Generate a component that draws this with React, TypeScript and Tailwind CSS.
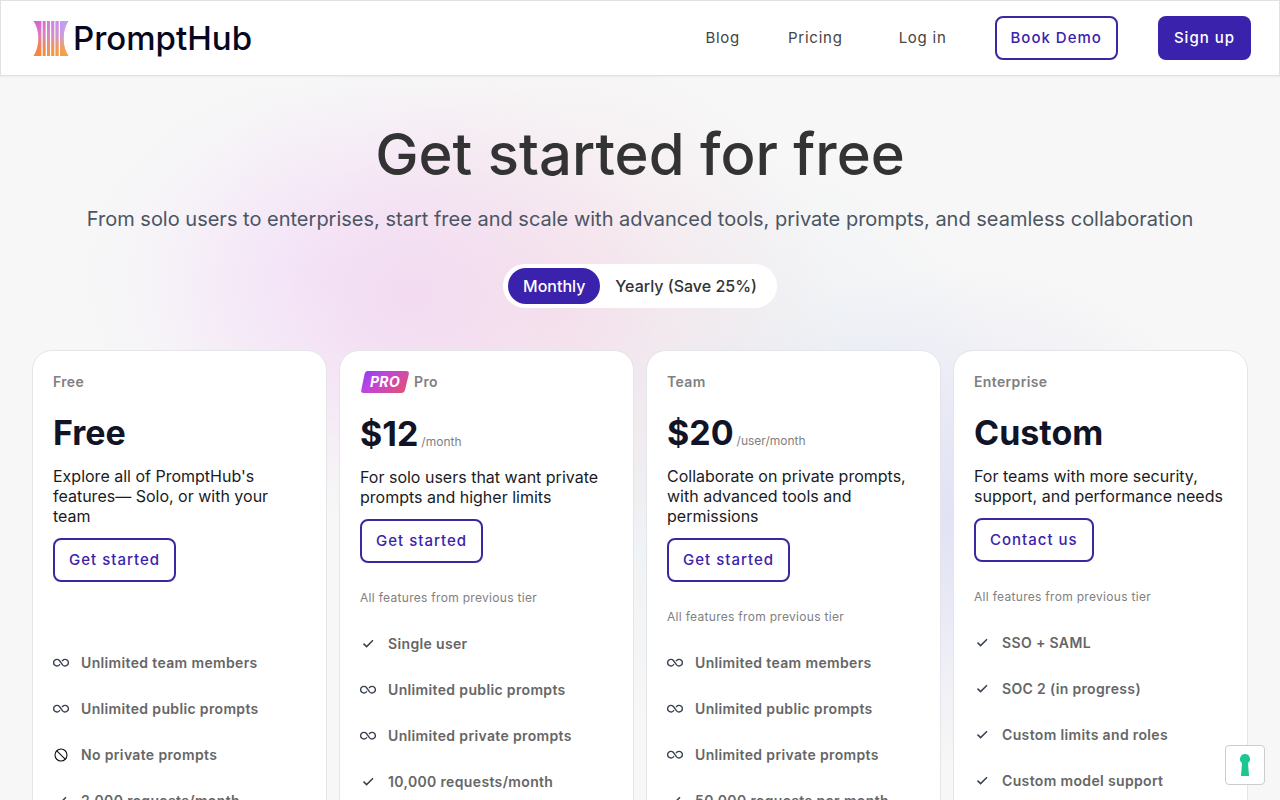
import { useState } from "react";

type Icon = "check" | "infinity" | "ban";
type Plan = {
  name: string;
  price: string;
  unit?: string;
  description: string;
  cta: string;
  note?: string;
  pro?: boolean;
  features: [Icon, string][];
};

const plans: Plan[] = [
  {
    name: "Free",
    price: "Free",
    description: "Explore all of PromptHub's features— Solo, or with your team",
    cta: "Get started",
    features: [
      ["infinity", "Unlimited team members"],
      ["infinity", "Unlimited public prompts"],
      ["ban", "No private prompts"],
      ["check", "2,000 requests/month"],
    ],
  },
  {
    name: "Pro",
    pro: true,
    price: "$12",
    unit: "/month",
    description: "For solo users that want private prompts and higher limits",
    cta: "Get started",
    note: "All features from previous tier",
    features: [
      ["check", "Single user"],
      ["infinity", "Unlimited public prompts"],
      ["infinity", "Unlimited private prompts"],
      ["check", "10,000 requests/month"],
    ],
  },
  {
    name: "Team",
    price: "$20",
    unit: "/user/month",
    description: "Collaborate on private prompts, with advanced tools and permissions",
    cta: "Get started",
    note: "All features from previous tier",
    features: [
      ["infinity", "Unlimited team members"],
      ["infinity", "Unlimited public prompts"],
      ["infinity", "Unlimited private prompts"],
      ["check", "50,000 requests per month"],
    ],
  },
  {
    name: "Enterprise",
    price: "Custom",
    description: "For teams with more security, support, and performance needs",
    cta: "Contact us",
    note: "All features from previous tier",
    features: [
      ["check", "SSO + SAML"],
      ["check", "SOC 2 (in progress)"],
      ["check", "Custom limits and roles"],
      ["check", "Custom model support"],
    ],
  },
];

function FeatureIcon({ icon }: { icon: Icon }) {
  return (
    <svg viewBox="0 0 16 16" className="size-4 shrink-0" fill="none" stroke="#374151" aria-hidden="true">
      {icon === "check" && <path d="M3.5 7.6 6.6 10.6 13 4.3" strokeWidth="1.5" />}
      {icon === "infinity" && (
        <path
          d="M6.8 9.2 6.4 9.9A3.3 3.3 0 1 1 6.4 5.5L9.6 9.9A3.3 3.3 0 1 0 9.6 5.5L9.1 6.2"
          strokeWidth="1.4"
        />
      )}
      {icon === "ban" && (
        <g stroke="#111" strokeWidth="1.1">
          <circle cx="8" cy="8" r="6" />
          <path d="M3.8 3.8 12.2 12.2" />
        </g>
      )}
    </svg>
  );
}

function Logo() {
  return (
    <svg viewBox="0 0 36 36" className="size-9" aria-hidden="true">
      <defs>
        <linearGradient id="logo-fill" x1="0" y1="0" x2="0" y2="1">
          <stop offset="0" stopColor="#d95fd8" />
          <stop offset="0.4" stopColor="#e07bb4" />
          <stop offset="0.75" stopColor="#f28350" />
          <stop offset="1" stopColor="#f5883f" />
        </linearGradient>
        <linearGradient id="logo-side" x1="0" y1="0" x2="0" y2="1">
          <stop offset="0" stopColor="#b9a6fa" />
          <stop offset="0.45" stopColor="#c9a0dc" />
          <stop offset="0.8" stopColor="#f2a35c" />
          <stop offset="1" stopColor="#f7a23d" />
        </linearGradient>
        <linearGradient id="logo-fade" x1="0" y1="0" x2="1" y2="0">
          <stop offset="0.15" stopColor="#fff" stopOpacity="0" />
          <stop offset="0.9" stopColor="#fff" />
        </linearGradient>
        <mask id="logo-mask">
          <rect width="36" height="36" fill="url(#logo-fade)" />
        </mask>
        <clipPath id="logo-shape">
          <path d="M.5 1H8.4V36H.5C3.6 31.3 5.3 25.5 5.3 18.5S3.6 5.7.5 1ZM9.7 1H12.6V36H9.7ZM14 1H16.9V36H14ZM18.3 1H21.2V36H18.3ZM22.6 1H25.5V36H22.6ZM27 1H35.3C32.2 5.7 30.5 11.5 30.5 18.5S32.2 31.3 35.3 36H27Z" />
        </clipPath>
      </defs>
      <g clipPath="url(#logo-shape)">
        <rect width="36" height="36" fill="url(#logo-fill)" />
        <rect width="36" height="36" fill="url(#logo-side)" mask="url(#logo-mask)" />
      </g>
    </svg>
  );
}

function ProBadge() {
  return (
    <span className="relative mr-1 inline-flex h-[22px] w-[50px] items-center justify-center">
      <svg viewBox="0 0 50 22" className="absolute inset-0 size-full" aria-hidden="true">
        <defs>
          <linearGradient id="pro-fill" x1="0" y1="0" x2="1" y2="0.5">
            <stop offset="0" stopColor="#8b3df0" />
            <stop offset="0.4" stopColor="#bb45e2" />
            <stop offset="1" stopColor="#dc4f83" />
          </linearGradient>
        </defs>
        <path d="M7.4 0H46Q49.5 0 48.8 3.2L45 19Q44.2 22 41.2 22H3.6Q.6 22 1.3 19L4.7 2.6Q5.3 0 7.4 0Z" fill="url(#pro-fill)" />
      </svg>
      <span className="relative text-sm leading-5 font-bold text-white italic">PRO</span>
    </span>
  );
}

const outlineButton =
  "inline-flex h-11 items-center rounded-lg border-2 border-[#3b28a0] bg-white px-3.5 text-[15px] font-medium tracking-[1px] text-[#3b22ac]";

function PlanCard({ plan }: { plan: Plan }) {
  return (
    <article className="rounded-[20px] border border-[#e3e5e8] bg-white p-5">
      <h2 className="flex min-h-[21px] items-center text-sm leading-5 font-semibold tracking-wide text-[#808080]">
        {plan.pro && <ProBadge />}
        {plan.name}
      </h2>
      <p className="mt-5 flex items-baseline leading-[42px]">
        <span className="text-[34px] leading-[42px] font-bold text-[#101426]">{plan.price}</span>
        {plan.unit && <span className="ml-[3px] text-xs text-[#808080]">{plan.unit}</span>}
      </p>
      <p className="mt-3 leading-5 text-[#1a1b25]">{plan.description}</p>
      <a href="#" className={`mt-3 ${outlineButton}`}>
        {plan.cta}
      </a>
      <p className="mt-[27px] min-h-4 text-xs leading-4 tracking-wide text-[#808080]">{plan.note}</p>
      <ul className="mt-[27px] space-y-6">
        {plan.features.map(([icon, text]) => (
          <li key={text} className="flex items-center gap-3 text-sm leading-[22px] font-semibold tracking-wide text-[#666]">
            <FeatureIcon icon={icon} />
            {text}
          </li>
        ))}
      </ul>
    </article>
  );
}

export default function App() {
  const [yearly, setYearly] = useState(false);
  return (
    <div className="min-h-screen bg-[#f7f7f7] font-['Inter',sans-serif]">
      <header className="relative flex h-[76px] items-center justify-between border border-[#e1e1e1] bg-white pr-7 pl-8 shadow-xs">
        <a href="#" className="flex items-center gap-1 text-[33px] leading-9 font-medium text-[#060821]">
          <Logo />
          PromptHub
        </a>
        <nav className="flex items-center text-[15px] tracking-wider text-[#444]">
          <a href="#" className="mr-12">Blog</a>
          <a href="#" className="mr-14">Pricing</a>
          <a href="#" className="mr-12">Log in</a>
          <a href="#" className={`mr-10 ${outlineButton}`}>Book Demo</a>
          <a href="#" className="inline-flex h-11 items-center rounded-lg bg-[#3b22ac] px-4 font-medium tracking-[1px] text-white">Sign up</a>
        </nav>
      </header>
      <main className="bg-[radial-gradient(ellipse_260px_230px_at_410px_220px,#f0d2f098,#f0d2f000),radial-gradient(ellipse_270px_250px_at_560px_230px,#f5d4e088,#f5d4e000),radial-gradient(ellipse_240px_200px_at_320px_200px,#f3dcff70,#f3dcff00),radial-gradient(ellipse_280px_250px_at_960px_440px,#d9d9f5b0,#d9d9f500),radial-gradient(ellipse_260px_300px_at_760px_380px,#dfe8f0a0,#dfe8f000)] px-8 pt-10 pb-8">
        <h1 className="text-center text-[58px] leading-[76px] font-medium text-[#333]">Get started for free</h1>
        <p className="mt-[11px] text-center text-xl leading-8 text-[#4b5563]">
          From solo users to enterprises, start free and scale with advanced tools, private prompts, and seamless collaboration
        </p>
        <div className="mt-[29px] flex justify-center">
          <div className="flex rounded-full bg-white px-[5px] py-1 font-medium">
            <button
              type="button"
              aria-pressed={!yearly}
              onClick={() => setYearly(false)}
              className={`h-9 rounded-full px-[15px] ${yearly ? "text-[#333]" : "bg-[#3b22ac] text-white"}`}
            >
              Monthly
            </button>
            <button
              type="button"
              aria-pressed={yearly}
              onClick={() => setYearly(true)}
              className={`h-9 rounded-full px-[15px] ${yearly ? "bg-[#3b22ac] text-white" : "text-[#333]"}`}
            >
              Yearly (Save 25%)
            </button>
          </div>
        </div>
        <div className="mt-[42px] grid grid-cols-4 gap-3">
          {plans.map((plan) => (
            <PlanCard key={plan.name} plan={plan} />
          ))}
        </div>
      </main>
      <button
        type="button"
        aria-label="Privacy preferences"
        className="fixed right-[15px] bottom-[15px] flex size-10 items-center justify-center rounded border border-[#ccc] bg-white"
      >
        <svg viewBox="0 0 12 24" className="h-6 w-3" aria-hidden="true">
          <path d="M6 1a5 5 0 0 1 3 9l1 13H2l1-13a5 5 0 0 1 3-9Z" fill="#1cc691" />
        </svg>
      </button>
    </div>
  );
}
